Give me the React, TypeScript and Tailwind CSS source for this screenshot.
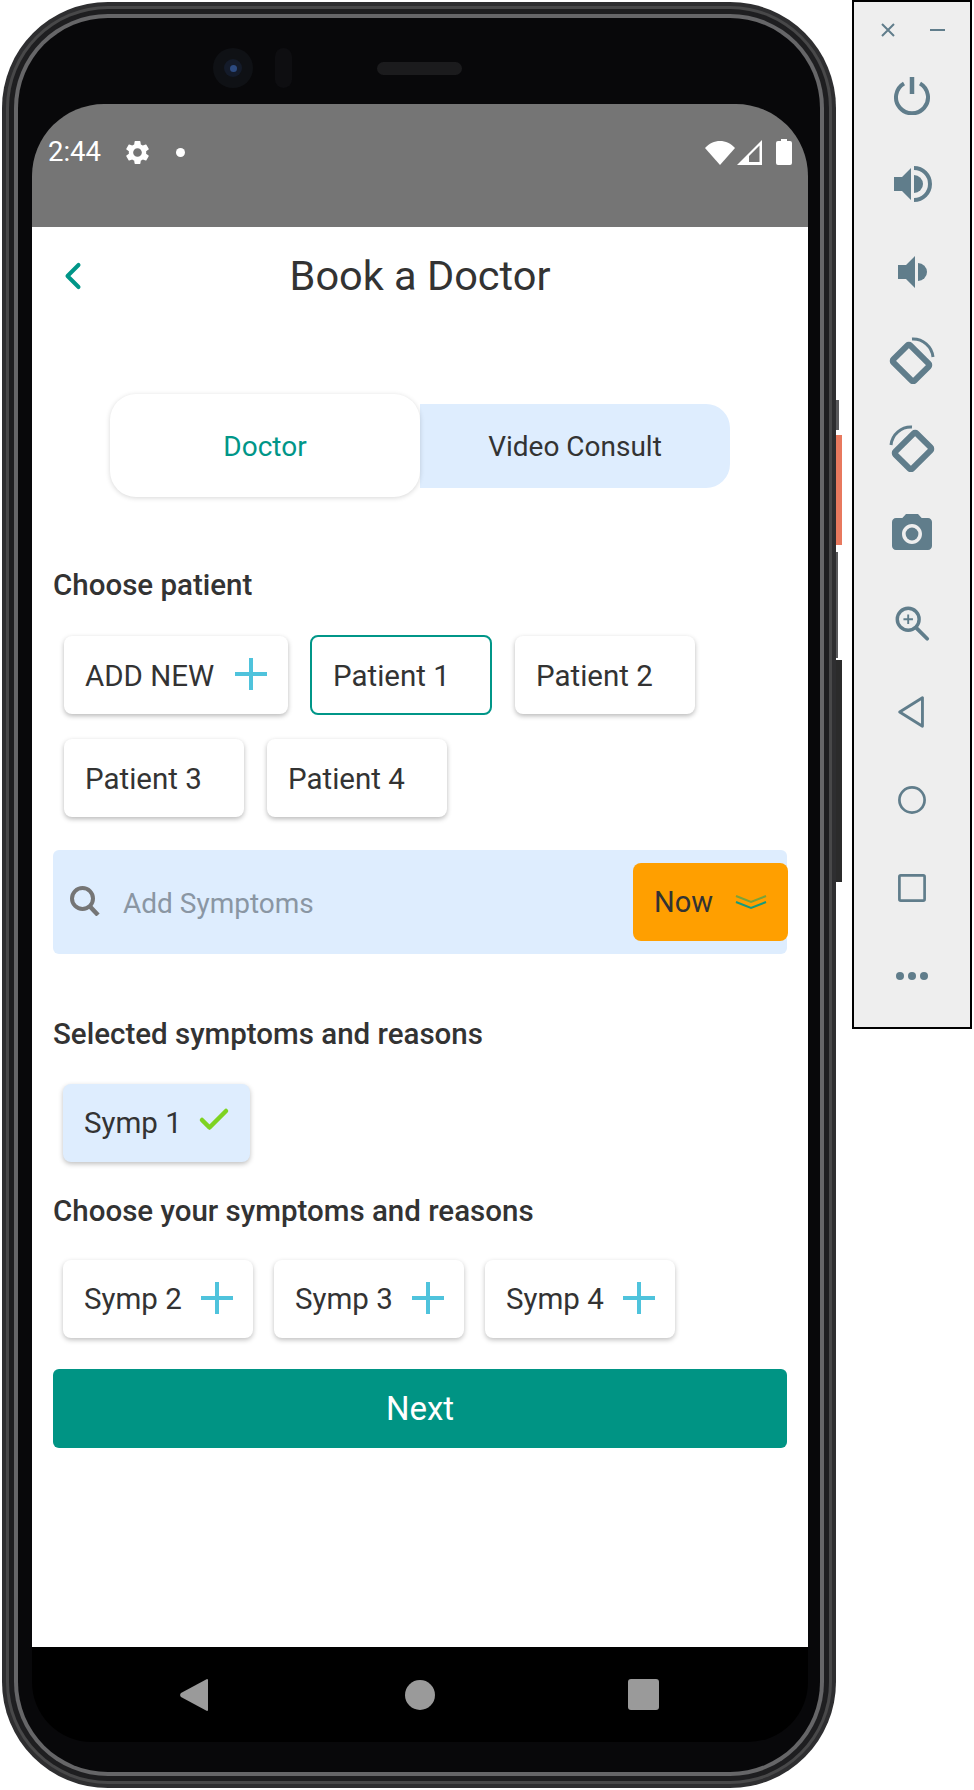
import { MdSettings, MdCameraAlt } from "react-icons/md";
import { ChevronLeft, Check } from "lucide-react";

function PlusIcon() {
  return (
    <svg viewBox="0 0 32 32" className="w-[32px] h-[32px] mb-[3px]" stroke="#4fc3dc" strokeWidth="4">
      <path d="M16 0v32M0 16h32" />
    </svg>
  );
}

function Chip({ label, width, selected, children }: { label: string; width: string; selected?: boolean; children?: React.ReactNode }) {
  return (
    <div
      className={`${width} flex items-center justify-between pl-[21px] pr-[21px] rounded-lg text-[29.500px] text-[#333] ${
        selected ? "h-[80px] -my-[1px] -ml-[1px] border-2 border-[#009688]" : "h-[78px] shadow-[0_2px_5px_rgba(0,0,0,0.28)]"
      }`}
    >
      <span className="pt-[2px]">{label}</span>
      {children}
    </div>
  );
}

function SympChip({ label, width, blue, children }: { label: string; width: string; blue?: boolean; children: React.ReactNode }) {
  return (
    <div
      className={`${width} h-[78px] flex items-center justify-between pl-[21px] pr-[20px] rounded-lg text-[29.500px] text-[#333] shadow-[0_2px_5px_rgba(0,0,0,0.25)] ${
        blue ? "bg-[#deedfe]" : "bg-white"
      }`}
    >
      <span>{label}</span>
      {children}
    </div>
  );
}

function Heading({ children }: { children: React.ReactNode }) {
  return <h2 className="text-[29.500px] leading-[32px] font-medium text-[#333]">{children}</h2>;
}

function ToolRow({ children }: { children: React.ReactNode }) {
  return <div className="h-[88px] flex items-center justify-center shrink-0">{children}</div>;
}

function SidePanel() {
  return (
    <aside className="w-[120px] h-[1029px] border-2 border-black bg-[#eeeeee] flex flex-col text-[#607d8b]">
      <div className="h-[50px] flex items-center justify-between pl-[26px] pr-[25px] pt-[6px] shrink-0">
        <svg viewBox="0 0 16 16" className="w-[16px] h-[16px]" stroke="#607d8b" strokeWidth="2">
          <path d="M2 2 14 14M14 2 2 14" />
        </svg>
        <div className="w-[15px] h-[2px] bg-[#607d8b]" />
      </div>
      <ToolRow>
        <svg viewBox="0 0 40 40" className="w-[40px] h-[40px] mb-[2px]" fill="none" stroke="currentColor" strokeWidth="4">
          <path d="M12 8.500a16 16 0 1 0 16 0" />
          <path d="M20 2v17" strokeWidth="4.500" />
        </svg>
      </ToolRow>
      <ToolRow>
        <svg viewBox="0 0 40 40" className="w-[40px] h-[40px]" fill="currentColor">
          <path d="M2 13h8l9-9v32l-9-9H2z" />
          <path d="M22 11a9 9 0 0 1 0 18z" />
          <path d="M22 2a18 18 0 0 1 0 36v-4a14 14 0 0 0 0-28z" />
        </svg>
      </ToolRow>
      <ToolRow>
        <svg viewBox="0 0 40 40" className="w-[40px] h-[40px]" fill="currentColor">
          <path d="M6 13h8l9-9v32l-9-9H6z" />
          <path d="M26 11a9 9 0 0 1 0 18z" />
        </svg>
      </ToolRow>
      <ToolRow>
        <svg viewBox="0 0 48 48" className="w-[48px] h-[48px]" fill="none" stroke="currentColor">
          <rect x="8" y="15" width="30" height="24" rx="2" strokeWidth="6" transform="rotate(45 23 27)" />
          <path d="M24 3a20 20 0 0 1 21 18" strokeWidth="3" />
        </svg>
      </ToolRow>
      <ToolRow>
        <svg viewBox="0 0 48 48" className="w-[48px] h-[48px]" fill="none" stroke="currentColor">
          <rect x="10" y="15" width="30" height="24" rx="2" strokeWidth="6" transform="rotate(-45 25 27)" />
          <path d="M24 3A20 20 0 0 0 3 21" strokeWidth="3" />
        </svg>
      </ToolRow>
      <ToolRow>
        <MdCameraAlt className="w-[48px] h-[48px] mb-[4px]" />
      </ToolRow>
      <ToolRow>
        <svg viewBox="0 0 40 40" className="w-[38px] h-[38px]" fill="none" stroke="currentColor" strokeWidth="3.600">
          <circle cx="16" cy="15" r="11.500" />
          <path d="M24.500 24 36 35.500" strokeWidth="4" strokeLinecap="round" />
          <path d="M16 10v10M11 15h10" strokeWidth="2" />
        </svg>
      </ToolRow>
      <ToolRow>
        <svg viewBox="0 0 40 40" className="w-[38px] h-[38px]" fill="none" stroke="currentColor" strokeWidth="3" strokeLinejoin="round">
          <path d="M31 5v30L7 20z" />
        </svg>
      </ToolRow>
      <ToolRow>
        <svg viewBox="0 0 40 40" className="w-[36px] h-[36px]" fill="none" stroke="currentColor" strokeWidth="3">
          <circle cx="20" cy="20" r="14" />
        </svg>
      </ToolRow>
      <ToolRow>
        <svg viewBox="0 0 40 40" className="w-[36px] h-[36px]" fill="none" stroke="currentColor" strokeWidth="3">
          <rect x="6" y="6" width="28" height="28" rx="1.500" />
        </svg>
      </ToolRow>
      <ToolRow>
        <div className="flex gap-[4px]">
          <div className="w-[8px] h-[8px] rounded-full bg-[#607d8b]" />
          <div className="w-[8px] h-[8px] rounded-full bg-[#607d8b]" />
          <div className="w-[8px] h-[8px] rounded-full bg-[#607d8b]" />
        </div>
      </ToolRow>
    </aside>
  );
}

function StatusBar() {
  return (
    <div className="h-[123px] bg-[#757575] rounded-t-[72px] text-white shrink-0">
      <div className="h-[96px] flex items-center pl-[16px] pr-[16px]">
        <span className="text-[27.500px] w-[75px]">2:44</span>
        <MdSettings className="w-[29px] h-[29px]" />
        <div className="w-[9px] h-[9px] rounded-full bg-white ml-[24px]" />
        <div className="flex-1" />
        <svg viewBox="0 0 30 25" className="w-[30px] h-[25px]" fill="white">
          <path d="M0 8C8-1.500 22-1.500 30 8L15 25z" />
        </svg>
        <svg viewBox="0 0 25 25" className="w-[25px] h-[25px] ml-[2px]" fill="white" fillRule="evenodd">
          <path d="M25 0v25H0zM22.500 5.500 12 16v6h10.500z" />
        </svg>
        <svg viewBox="0 0 16 26" className="w-[16px] h-[26px] ml-[14px]" fill="white">
          <path d="M5 0h6v2h3a2 2 0 0 1 2 2v20a2 2 0 0 1-2 2H2a2 2 0 0 1-2-2V4a2 2 0 0 1 2-2h3z" />
        </svg>
      </div>
    </div>
  );
}

function Screen() {
  return (
    <div className="flex-1 bg-white pl-[21px] pr-[21px]">
      <div className="h-[98px] flex items-center relative justify-center">
        <ChevronLeft className="absolute left-[-2px] w-[44px] h-[44px] text-[#009688]" strokeWidth={2.2} />
        <h1 className="text-[41.500px] text-[#333]">Book a Doctor</h1>
      </div>
      <div className="mt-[69px] ml-[57px] flex items-center text-[28px]">
        <div className="w-[310px] h-[103px] rounded-[26px] bg-white flex items-center justify-center text-[#009688] pt-[2px] shadow-[0_1px_5px_rgba(0,0,0,0.16)] z-10">
          Doctor
        </div>
        <div className="w-[310px] h-[84px] rounded-r-[24px] bg-[#deedfe] flex items-center justify-center text-[#333]">
          <span className="pt-[2px]">Video Consult</span>
        </div>
      </div>
      <div className="mt-[72px]">
        <Heading>Choose patient</Heading>
      </div>
      <div className="mt-[35px] ml-[11px] flex flex-wrap gap-x-[23px] gap-y-[25px]">
        <Chip label="ADD NEW" width="w-[224px]">
          <PlusIcon />
        </Chip>
        <Chip label="Patient 1" width="w-[182px]" selected />
        <Chip label="Patient 2" width="w-[180px]" />
        <Chip label="Patient 3" width="w-[180px]" />
        <Chip label="Patient 4" width="w-[180px]" />
      </div>
      <div className="mt-[33px] h-[104px] bg-[#deedfe] rounded-md flex items-center pl-[17px] relative">
        <svg viewBox="0 0 30 30" className="w-[30px] h-[30px] mb-[2px]" fill="none" stroke="#757575">
          <circle cx="12.500" cy="12.500" r="10.500" strokeWidth="4" />
          <path d="M19.500 20 28 29" strokeWidth="4.500" />
        </svg>
        <span className="ml-[23px] text-[28px] text-[#8a96a3] pt-[3px]">Add Symptoms</span>
        <div className="absolute right-[-1px] top-[13px] w-[155px] h-[78px] bg-[#ff9f00] rounded-lg flex items-center pl-[21px] text-[29px] text-[#333]">
          <span className="pt-[2px]">Now</span>
          <svg viewBox="0 0 32 16" className="w-[32px] h-[16px] ml-[22px]" fill="none" strokeWidth="2">
            <path d="M1 2 16 8 31 2" stroke="#7aa23a" />
            <path d="M1 8 16 14 31 8" stroke="#169a7c" />
          </svg>
        </div>
      </div>
      <div className="mt-[64px]">
        <Heading>Selected symptoms and reasons</Heading>
      </div>
      <div className="mt-[34px] ml-[10px] flex">
        <SympChip label="Symp 1" width="w-[187px]" blue>
          <Check className="w-[36px] h-[36px] text-[#7ed321] mb-[6px] -mr-[2px]" strokeWidth={3} />
        </SympChip>
      </div>
      <div className="mt-[33px]">
        <Heading>Choose your symptoms and reasons</Heading>
      </div>
      <div className="mt-[33px] ml-[10px] flex gap-[21px]">
        <SympChip label="Symp 2" width="w-[190px]">
          <PlusIcon />
        </SympChip>
        <SympChip label="Symp 3" width="w-[190px]">
          <PlusIcon />
        </SympChip>
        <SympChip label="Symp 4" width="w-[190px]">
          <PlusIcon />
        </SympChip>
      </div>
      <button className="mt-[31px] w-full h-[79px] bg-[#009484] rounded-md text-white text-[33px]">Next</button>
    </div>
  );
}

function Phone() {
  return (
    <div className="relative w-[834px] h-[1786px] rounded-[106px] bg-[#2e2e30] p-[4px]">
      {/* side buttons */}
      <div className="absolute right-[-3px] top-[398px] w-[3px] h-[30px] bg-[#5a5a5c]" />
      <div className="absolute right-[-6px] top-[433px] w-[6px] h-[110px] bg-[#e8795e]" />
      <div className="absolute right-[-2px] top-[550px] w-[2px] h-[106px] bg-[#5a5a5c]" />
      <div className="absolute right-[-6px] top-[658px] w-[6px] h-[222px] bg-[#2b2b2b]" />
      <div className="w-full h-full rounded-[102px] bg-[#484849] p-[3px]">
        <div className="w-full h-full rounded-[99px] bg-[#1e1e20] p-[5px]">
          <div className="w-full h-full rounded-[94px] bg-[#666668] p-[4px]">
            <div className="w-full h-full rounded-[90px] bg-[#08080a] pl-[14px] pr-[12px] flex flex-col">
              <div className="h-[86px] flex items-center pl-[181px] pt-[14px] shrink-0">
                <div className="w-[40px] h-[40px] rounded-full bg-[#0f1115] flex items-center justify-center">
                  <div className="w-[18px] h-[18px] rounded-full bg-[#141b2a] flex items-center justify-center">
                    <div className="w-[7px] h-[7px] rounded-full bg-[#2c4a80]" />
                  </div>
                </div>
                <div className="ml-[22px] w-[17px] h-[40px] rounded-full bg-[#0e0e11]" />
                <div className="ml-[85px] w-[85px] h-[13px] rounded-full bg-[#1b1b1d]" />
              </div>
              <StatusBar />
              <Screen />
              <div className="h-[95px] bg-black rounded-b-[60px] flex items-center relative shrink-0">
                <svg viewBox="0 0 28 32" className="absolute left-[148px] w-[28px] h-[32px]" fill="#9a9a9a">
                  <path d="M27 0a1 1 0 0 1 1 1v30a1 1 0 0 1-1 1L1 18a3 3 0 0 1 0-4z" />
                </svg>
                <div className="absolute left-[373px] w-[30px] h-[30px] rounded-full bg-[#9a9a9a]" />
                <div className="absolute left-[596px] w-[31px] h-[31px] rounded-[3px] bg-[#9a9a9a]" />
              </div>
              <div className="h-[30px] shrink-0" />
            </div>
          </div>
        </div>
      </div>
    </div>
  );
}

export default function App() {
  return (
    <div className="w-[974px] h-[1790px] bg-white flex font-['Roboto',sans-serif] overflow-hidden">
      <div className="ml-[2px] mt-[2px]">
        <Phone />
      </div>
      <div className="ml-[16px]">
        <SidePanel />
      </div>
    </div>
  );
}
